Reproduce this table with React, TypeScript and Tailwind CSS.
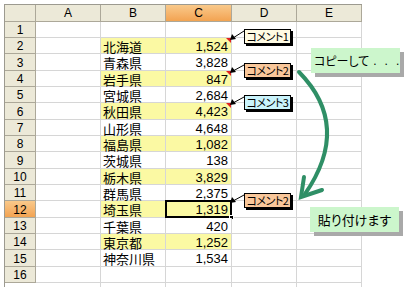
import React from 'react'

const rows: [number, string, string][] = [
    [1, '', ''],
    [2, '北海道', '1,524'],
    [3, '青森県', '3,828'],
    [4, '岩手県', '847'],
    [5, '宮城県', '2,684'],
    [6, '秋田県', '4,423'],
    [7, '山形県', '4,648'],
    [8, '福島県', '1,082'],
    [9, '茨城県', '138'],
    [10, '栃木県', '3,829'],
    [11, '群馬県', '2,375'],
    [12, '埼玉県', '1,319'],
    [13, '千葉県', '420'],
    [14, '東京都', '1,252'],
    [15, '神奈川県', '1,534'],
    [16, '', ''],
]

const commentRows = [2, 4, 6, 12]

const jp = "font-['Noto_Sans_CJK_JP','Noto_Sans',sans-serif]"
const latin = "font-['Liberation_Sans','Noto_Sans_CJK_JP',sans-serif]"

function Comment({ label, className }: { label: string; className: string }) {
    return (
        <div
            className={`absolute left-[244px] w-[47px] h-[15px] border border-black shadow-[2px_2px_0_#000] flex items-center justify-center whitespace-nowrap text-[11px] leading-none tracking-[-0.5px] text-black [font-feature-settings:'palt'] ${jp} ${className}`}
        >
            {label}
        </div>
    )
}

export default function App() {
    const cols = ['A', 'B', 'C', 'D', 'E']

    return (
        <div className="relative w-[410px] h-[291px] bg-white overflow-hidden">
            <div className="pl-[4px] pt-[4px]">
                <div className="inline-grid grid-cols-[31px_65px_65px_66px_65px_65px] border-l border-t border-[#9c9a90]">
                    {/* header row */}
                    <div className="h-[17px] bg-[#ece9d8] border-r border-b border-[#aca899]" />
                    {cols.map((c) => (
                        <div
                            key={c}
                            className={`h-[17px] border-r border-b border-[#aca899] flex items-center justify-center text-[12px] leading-none text-black ${latin} ${c === 'C' ? 'bg-gradient-to-b from-[#f9c98a] to-[#f2a351]' : 'bg-[#ece9d8]'}`}
                        >
                            {c}
                        </div>
                    ))}

                    {rows.map(([n, pref, val], i) => {
                        const h = i % 3 === 2 ? 'h-[17px]' : 'h-[16px]'
                        const yellow = n % 2 === 0 && n >= 2 && n <= 14
                        const selected = n === 12
                        return (
                            <React.Fragment key={n}>
                                <div
                                    className={`${h} border-r border-b border-[#aca899] flex items-end justify-center pb-[1px] text-[12px] leading-none text-black ${latin} ${selected ? 'bg-gradient-to-b from-[#f9c98a] to-[#f2a351]' : 'bg-[#ece9d8]'}`}
                                >
                                    {n}
                                </div>
                                <div className={`${h} border-r border-b border-[#d6d6d6]`} />
                                <div
                                    className={`${h} border-r border-b border-[#d6d6d6] flex items-center pl-[2px] pt-[1px] text-[13px] leading-none whitespace-nowrap text-black ${jp} ${yellow ? 'bg-[#fbf9a3]' : 'bg-white'}`}
                                >
                                    {pref}
                                </div>
                                <div
                                    className={`relative ${h} border-r border-b border-[#d6d6d6] flex items-center justify-end pr-[3px] pt-[1px] text-[13px] leading-none text-black ${latin} ${yellow ? 'bg-[#fbf9a3]' : 'bg-white'}`}
                                >
                                    {val}
                                    {commentRows.includes(n) && !selected && (
                                        <span className="absolute top-0 right-0 w-0 h-0 border-l-[5px] border-l-transparent border-t-[5px] border-t-[#e02020]" />
                                    )}
                                    {selected && (
                                        <>
                                            <span className="absolute -left-[1px] -top-[1px] -right-[1px] -bottom-[1px] border-2 border-black" />
                                            <span className="absolute -right-[3px] -bottom-[3px] w-[5px] h-[5px] bg-black border border-white" />
                                        </>
                                    )}
                                </div>
                                <div className={`${h} border-r border-b border-[#d6d6d6]`} />
                                <div className={`${h} border-r border-b border-[#d6d6d6]`} />
                            </React.Fragment>
                        )
                    })}

                    {/* clipped tail below row 16 */}
                    <div className="h-[4px]" />
                    <div className="h-[4px] border-r border-[#d6d6d6]" />
                    <div className="h-[4px] border-r border-[#d6d6d6]" />
                    <div className="h-[4px] border-r border-[#d6d6d6]" />
                    <div className="h-[4px] border-r border-[#d6d6d6]" />
                    <div className="h-[4px] border-r border-[#d6d6d6]" />
                </div>
            </div>

            {/* comment boxes */}
            <Comment label="コメント1" className="top-[29px] bg-[#fffbe3]" />
            <Comment label="コメント2" className="top-[63px] bg-[#f9c79a]" />
            <Comment label="コメント3" className="top-[95px] bg-[#c9f3fb]" />
            <Comment label="コメント2" className="top-[193px] bg-[#f9c79a]" />

            {/* callouts */}
            <div
                className={`absolute left-[311px] top-[48px] w-[89px] h-[25px] bg-[#ccf6cc] shadow-[4px_4px_0_#a9a9a9] flex items-center pl-[3px] whitespace-nowrap text-[12px] leading-none text-black ${jp}`}
            >
                <span className="[font-feature-settings:'palt']">コピーして</span>
                <span className={`pl-[4px] tracking-[8px] -mr-[8px] ${latin}`}>...</span>
            </div>
            <div
                className={`absolute left-[310px] top-[207px] w-[89px] h-[25px] bg-[#ccf6cc] shadow-[4px_4px_0_#a9a9a9] flex items-center justify-center whitespace-nowrap text-[13px] leading-none text-black [font-feature-settings:'palt'] ${jp}`}
            >
                貼り付けます
            </div>

            {/* arrows */}
            <svg className="absolute inset-0 pointer-events-none" width="410" height="291" viewBox="0 0 410 291">
                {[
                    [244, 31, 230, 40],
                    [244, 65, 230, 73],
                    [244, 97, 230, 105],
                    [244, 195, 230, 203],
                ].map(([x1, y1, x2, y2], k) => (
                    <g key={k}>
                        <line x1={x1} y1={y1} x2={x2 + 3} y2={y2 - 2} stroke="#000" strokeWidth="1" />
                        <polygon points={`${x2},${y2} ${x2 + 2},${y2 - 6} ${x2 + 6},${y2 - 1}`} fill="#000" />
                    </g>
                ))}
                <path d="M 299 72 Q 352 126 305 194" fill="none" stroke="#2f8f66" strokeWidth="4" strokeLinecap="round" />
                <polyline points="304,177 301,197 322,190" fill="none" stroke="#2f8f66" strokeWidth="4" strokeLinecap="round" strokeLinejoin="miter" />
            </svg>
        </div>
    )
}
